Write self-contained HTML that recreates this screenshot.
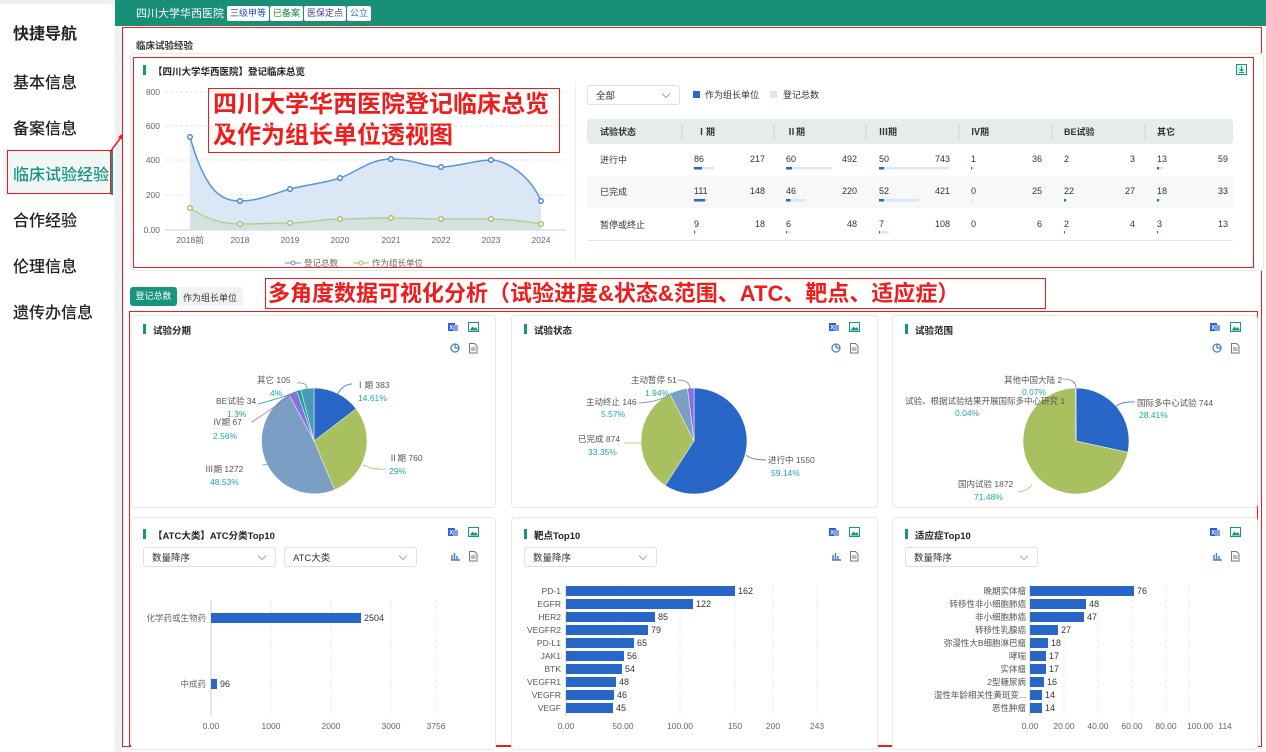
<!DOCTYPE html>
<html><head><meta charset="utf-8">
<style>
*{margin:0;padding:0;box-sizing:border-box}
body{width:1266px;height:752px;overflow:hidden;background:#eef1f3;font-family:"Liberation Sans","Noto Sans CJK SC",sans-serif;position:relative;color:#333}
.a{position:absolute}
.nav{font-size:16px;color:#222;left:13px;font-weight:500}
.badge{position:absolute;top:6px;height:15px;background:#fff;border-radius:2px;font-size:9px;line-height:15px;padding:0 3px}
.card{position:absolute;background:#fff;border:1px solid #e6e8ea;border-radius:4px}
.rb{position:absolute;border:1.5px solid #f01c1c}
.tt{position:absolute;font-size:9.5px;font-weight:bold;color:#222}
.tt:before{content:"";position:absolute;left:-10px;top:1px;width:3px;height:10px;background:#17957f}
.sel{position:absolute;height:20px;border:1px solid #dcdfe3;border-radius:3px;background:#fff;font-size:9.5px;padding-left:8px;color:#333;display:flex;align-items:center}
.sel:after{content:"";position:absolute;right:10px;top:5px;width:5px;height:5px;border-right:1px solid #aaa;border-bottom:1px solid #aaa;transform:rotate(45deg)}
</style></head><body>
<!-- sidebar -->
<div class="a" style="left:0;top:4px;width:115px;height:748px;background:#fff;border-radius:0 8px 0 0"></div>
<div class="a nav" style="top:20px;font-weight:bold">快捷导航</div>
<div class="a nav" style="top:69px">基本信息</div>
<div class="a nav" style="top:115px">备案信息</div>
<div class="a" style="left:3px;top:149px;width:110px;height:46px;background:#f3f6f6"></div>
<div class="a" style="left:111px;top:149px;width:2px;height:46px;background:#17957f"></div>
<div class="a nav" style="top:161px;color:#17957f">临床试验经验</div>
<div class="rb" style="left:7px;top:150px;width:104px;height:44px"></div>
<div class="a nav" style="top:207px">合作经验</div>
<div class="a nav" style="top:253px">伦理信息</div>
<div class="a nav" style="top:299px">遗传办信息</div>
<svg class="a" style="left:108px;top:130px" width="20" height="25"><line x1="2" y1="22" x2="14" y2="6" stroke="#f01c1c" stroke-width="1.5"/><polygon points="17,2 10,7 15,10" fill="#f01c1c"/></svg>
<!-- header -->
<div class="a" style="left:115px;top:0;width:1151px;height:26px;background:#1a8f78"></div>
<div class="a" style="left:136px;top:5px;color:#fff;font-size:11px">四川大学华西医院</div>
<div class="badge" style="left:227px;color:#2a4ec0">三级甲等</div>
<div class="badge" style="left:270px;color:#1c8a3a">已备案</div>
<div class="badge" style="left:304px;color:#4a3a9c">医保定点</div>
<div class="badge" style="left:347px;color:#2a6ec0">公立</div>
<!-- main -->
<div class="a" style="left:122px;top:27px;width:1144px;height:725px;background:#fff"></div>
<div class="rb" style="left:122px;top:27px;width:1140px;height:720px"></div>
<div class="a" style="left:136px;top:38px;font-size:9.5px;font-weight:bold">临床试验经验</div>
<div class="card" style="left:130px;top:53px;width:1134px;height:218px"></div>
<div class="rb" style="left:133px;top:57px;width:1121px;height:211px"></div>
<div class="tt" style="left:153px;top:64px">【四川大学华西医院】登记临床总览</div>
<svg class="a" style="left:1236px;top:64px" width="11" height="11"><rect x="0.5" y="0.5" width="10" height="10" fill="#e3f3ef" stroke="#17957f"/><path d="M5.5 2v5M3.5 5l2 2 2-2M3 8.5h5" stroke="#17957f" fill="none"/></svg>
<div class="a" style="left:575px;top:82px;width:1px;height:180px;background:#eee"></div>
<div class="rb" style="left:208px;top:88px;width:352px;height:65px;background:#fff"></div>
<div class="a" style="left:213px;top:89px;color:#f01c1c;font-weight:bold;font-size:24px;line-height:31px">四川大学华西医院登记临床总览<br>及作为组长单位透视图</div>

<!-- table -->
<div class="sel" style="left:587px;top:85px;width:93px">全部</div>
<div class="a" style="left:693px;top:91px;width:7px;height:7px;background:#2867c7"></div>
<div class="a" style="left:705px;top:88px;font-size:9px">作为组长单位</div>
<div class="a" style="left:770px;top:91px;width:7px;height:7px;background:#dde6ee"></div>
<div class="a" style="left:783px;top:88px;font-size:9px">登记总数</div>
<div class="a" style="left:587px;top:119px;width:646px;height:25px;background:#e6ebeb;border-radius:4px"></div>
<div class="a" style="left:587px;top:176px;width:646px;height:32px;background:#f7f8f8"></div>
<div class="a" style="left:587px;top:240px;width:646px;height:1px;background:#e0e6ee"></div>
<svg class="a" style="left:0;top:0" width="1266" height="752" font-family="Liberation Sans,Noto Sans CJK SC,sans-serif">
<g fill="#333" font-size="9" font-weight="bold">
<text x="600" y="135">试验状态</text><text x="697" y="135">Ⅰ期</text><text x="787" y="135">Ⅱ期</text><text x="879" y="135">Ⅲ期</text><text x="971" y="135">Ⅳ期</text><text x="1064" y="135">BE试验</text><text x="1157" y="135">其它</text>
</g>
<g stroke="#cfd6d8"><line x1="682" y1="124" x2="682" y2="139"/><line x1="774" y1="124" x2="774" y2="139"/><line x1="866" y1="124" x2="866" y2="139"/><line x1="959" y1="124" x2="959" y2="139"/><line x1="1052" y1="124" x2="1052" y2="139"/><line x1="1145" y1="124" x2="1145" y2="139"/></g>
<g font-size="9" fill="#333">
<text x="600" y="163">进行中</text><text x="600" y="195">已完成</text><text x="600" y="228">暂停或终止</text>
<text x="694" y="162">86</text><text x="765" y="162" text-anchor="end">217</text>
<text x="786" y="162">60</text><text x="857" y="162" text-anchor="end">492</text>
<text x="879" y="162">50</text><text x="950" y="162" text-anchor="end">743</text>
<text x="971" y="162">1</text><text x="1042" y="162" text-anchor="end">36</text>
<text x="1064" y="162">2</text><text x="1135" y="162" text-anchor="end">3</text>
<text x="1157" y="162">13</text><text x="1228" y="162" text-anchor="end">59</text>
<text x="694" y="194">111</text><text x="765" y="194" text-anchor="end">148</text>
<text x="786" y="194">46</text><text x="857" y="194" text-anchor="end">220</text>
<text x="879" y="194">52</text><text x="950" y="194" text-anchor="end">421</text>
<text x="971" y="194">0</text><text x="1042" y="194" text-anchor="end">25</text>
<text x="1064" y="194">22</text><text x="1135" y="194" text-anchor="end">27</text>
<text x="1157" y="194">18</text><text x="1228" y="194" text-anchor="end">33</text>
<text x="694" y="227">9</text><text x="765" y="227" text-anchor="end">18</text>
<text x="786" y="227">6</text><text x="857" y="227" text-anchor="end">48</text>
<text x="879" y="227">7</text><text x="950" y="227" text-anchor="end">108</text>
<text x="971" y="227">0</text><text x="1042" y="227" text-anchor="end">6</text>
<text x="1064" y="227">2</text><text x="1135" y="227" text-anchor="end">4</text>
<text x="1157" y="227">3</text><text x="1228" y="227" text-anchor="end">13</text>
</g>
<g fill="#dde5ef">
<rect x="694" y="167" width="20" height="2.5"/><rect x="786" y="167" width="46" height="2.5"/><rect x="879" y="167" width="70" height="2.5"/><rect x="971" y="167" width="3" height="2.5"/><rect x="1157" y="167" width="6" height="2.5"/>
<rect x="694" y="199" width="14" height="2.5"/><rect x="786" y="199" width="20" height="2.5"/><rect x="879" y="199" width="40" height="2.5"/><rect x="971" y="199" width="2" height="2.5"/><rect x="1064" y="199" width="3" height="2.5"/><rect x="1157" y="199" width="3" height="2.5"/>
<rect x="694" y="231" width="2" height="2.5"/><rect x="786" y="231" width="5" height="2.5"/><rect x="879" y="231" width="10" height="2.5"/><rect x="1064" y="231" width="1" height="2.5"/><rect x="1157" y="231" width="1.5" height="2.5"/>
</g>
<g fill="#2867c7">
<rect x="694" y="167" width="8" height="2.5"/><rect x="786" y="167" width="6" height="2.5"/><rect x="879" y="167" width="5" height="2.5"/><rect x="971" y="167" width="1" height="2.5"/><rect x="1157" y="167" width="2" height="2.5"/>
<rect x="694" y="199" width="11" height="2.5"/><rect x="786" y="199" width="4.5" height="2.5"/><rect x="879" y="199" width="5" height="2.5"/><rect x="1064" y="199" width="2" height="2.5"/><rect x="1157" y="199" width="2" height="2.5"/>
<rect x="694" y="231" width="1" height="2.5"/><rect x="786" y="231" width="1" height="2.5"/><rect x="879" y="231" width="1" height="2.5"/><rect x="1064" y="231" width="1" height="2.5"/><rect x="1157" y="231" width="1" height="2.5"/>
</g>

<!-- line chart -->
<g stroke="#dfe6f0" stroke-dasharray="3,2"><line x1="165" y1="92" x2="566" y2="92"/><line x1="165" y1="126" x2="566" y2="126"/><line x1="165" y1="160" x2="566" y2="160"/><line x1="165" y1="195" x2="566" y2="195"/></g>
<line x1="165" y1="230" x2="566" y2="230" stroke="#c8d0dc"/>
<g font-size="8.5" fill="#666" text-anchor="end"><text x="160" y="95">800</text><text x="160" y="129">600</text><text x="160" y="163">400</text><text x="160" y="198">200</text><text x="160" y="233">0.00</text></g>
<g font-size="8.5" fill="#666" text-anchor="middle"><text x="190" y="243">2018前</text><text x="240" y="243">2018</text><text x="290" y="243">2019</text><text x="340" y="243">2020</text><text x="391" y="243">2021</text><text x="441" y="243">2022</text><text x="491" y="243">2023</text><text x="541" y="243">2024</text></g>
<path d="M190,137 C205,190 220,201 240,201 S275,193 290,189 S325,183 340,178 S370,159 391,159 S426,167 441,167 S476,160 491,160 S530,175 541,201 L541,230 L190,230Z" fill="#dbe7f5"/>
<path d="M190,137 C205,190 220,201 240,201 S275,193 290,189 S325,183 340,178 S370,159 391,159 S426,167 441,167 S476,160 491,160 S530,175 541,201" fill="none" stroke="#5a95dc" stroke-width="1.5"/>
<path d="M190,208 C205,218 220,224 240,224 S275,223 290,223 S325,219 340,219 S370,218 391,218 S426,219 441,219 S476,219 491,219 S530,222 541,224 L541,230 L190,230Z" fill="#d4e2df"/>
<path d="M190,208 C205,218 220,224 240,224 S275,223 290,223 S325,219 340,219 S370,218 391,218 S426,219 441,219 S476,219 491,219 S530,222 541,224" fill="none" stroke="#b5c98a" stroke-width="1.3"/>
<g fill="#fff" stroke="#3a7fd5" stroke-width="1.3"><circle cx="190" cy="137" r="2.3"/><circle cx="240" cy="201" r="2.3"/><circle cx="290" cy="189" r="2.3"/><circle cx="340" cy="178" r="2.3"/><circle cx="391" cy="159" r="2.3"/><circle cx="441" cy="167" r="2.3"/><circle cx="491" cy="160" r="2.3"/><circle cx="541" cy="201" r="2.3"/></g>
<g fill="#fff" stroke="#a5bd5a" stroke-width="1.3"><circle cx="190" cy="208" r="2.3"/><circle cx="240" cy="224" r="2.3"/><circle cx="290" cy="223" r="2.3"/><circle cx="340" cy="219" r="2.3"/><circle cx="391" cy="218" r="2.3"/><circle cx="441" cy="219" r="2.3"/><circle cx="491" cy="219" r="2.3"/><circle cx="541" cy="224" r="2.3"/></g>
<line x1="285" y1="263" x2="301" y2="263" stroke="#5a95dc"/><circle cx="293" cy="263" r="2" fill="#fff" stroke="#5a95dc"/>
<text x="304" y="266" font-size="8.5" fill="#666">登记总数</text>
<line x1="353" y1="263" x2="369" y2="263" stroke="#a5bd5a"/><circle cx="361" cy="263" r="2" fill="#fff" stroke="#a5bd5a"/>
<text x="372" y="266" font-size="8.5" fill="#666">作为组长单位</text>
</svg>

<!-- tabs -->
<div class="a" style="left:130px;top:287px;width:113px;height:19px;background:#f0f2f4;border-radius:3px"></div>
<div class="a" style="left:130px;top:287px;width:47px;height:19px;background:#17957f;border-radius:3px;color:#fff;font-size:9px;line-height:19px;text-align:center">登记总数</div>
<div class="a" style="left:183px;top:291px;font-size:9px;color:#333">作为组长单位</div>
<div class="rb" style="left:265px;top:278px;width:781px;height:31px"></div>
<div class="a" style="left:268px;top:280px;color:#f01c1c;font-weight:bold;font-size:22px;line-height:27px;white-space:nowrap">多角度数据可视化分析（试验进度&amp;状态&amp;范围、ATC、靶点、适应症）</div>
<div class="rb" style="left:129px;top:311px;width:1129px;height:435px"></div>

<!-- cards -->
<div class="card" style="left:131px;top:315px;width:365px;height:193px"></div>
<div class="card" style="left:511px;top:315px;width:367px;height:193px"></div>
<div class="card" style="left:892px;top:315px;width:366px;height:193px"></div>
<div class="card" style="left:131px;top:517px;width:365px;height:233px"></div>
<div class="card" style="left:511px;top:517px;width:367px;height:233px"></div>
<div class="card" style="left:892px;top:517px;width:366px;height:233px"></div>
<div class="tt" style="left:153px;top:323px">试验分期</div>
<div class="tt" style="left:534px;top:323px">试验状态</div>
<div class="tt" style="left:915px;top:323px">试验范围</div>
<div class="tt" style="left:153px;top:528px">【ATC大类】ATC分类Top10</div>
<div class="tt" style="left:534px;top:528px">靶点Top10</div>
<div class="tt" style="left:915px;top:528px">适应症Top10</div>
<div class="sel" style="left:143px;top:547px;width:133px">数量降序</div>
<div class="sel" style="left:284px;top:547px;width:133px">ATC大类</div>
<div class="sel" style="left:524px;top:547px;width:133px">数量降序</div>
<div class="sel" style="left:905px;top:547px;width:133px">数量降序</div>

<svg class="a" style="left:0;top:0" width="1266" height="752" font-family="Liberation Sans,Noto Sans CJK SC,sans-serif">
<defs>
<g id="xl"><rect x="0" y="1" width="7" height="8" fill="#2f5fd0"/><rect x="5" y="3" width="5" height="6" fill="#7aa0ee"/><text x="1.2" y="7.5" font-size="6" fill="#fff" font-weight="bold">X</text></g>
<g id="im"><rect x="0.5" y="0.5" width="10" height="9" fill="#fff" stroke="#17957f"/><path d="M1.5 8.5l3-4 2 2 1.5-1.5 2 3.5z" fill="#17957f"/></g>
<g id="pi"><circle cx="5" cy="5" r="4" fill="none" stroke="#4a7fcc" stroke-width="1.3"/><path d="M5 5V1M5 5h4" stroke="#4a7fcc" stroke-width="1.3"/></g>
<g id="bc"><path d="M1 9h9M2 9V4M4.5 9V2M7 9V5" stroke="#4a7fcc" stroke-width="1.5"/></g>
<g id="dc"><path d="M1.5 0.5h5l2.5 2.5v7h-7.5z" fill="#fff" stroke="#777"/><path d="M3 5h4.5M3 7h4.5" stroke="#777"/></g>
</defs>
<use href="#xl" x="448" y="322"/><use href="#im" x="468" y="322"/><use href="#pi" x="450" y="343"/><use href="#dc" x="468" y="343"/>
<use href="#xl" x="829" y="322"/><use href="#im" x="849" y="322"/><use href="#pi" x="831" y="343"/><use href="#dc" x="849" y="343"/>
<use href="#xl" x="1210" y="322"/><use href="#im" x="1230" y="322"/><use href="#pi" x="1212" y="343"/><use href="#dc" x="1230" y="343"/>
<use href="#xl" x="448" y="527"/><use href="#im" x="468" y="527"/><use href="#bc" x="450" y="551"/><use href="#dc" x="468" y="551"/>
<use href="#xl" x="829" y="527"/><use href="#im" x="849" y="527"/><use href="#bc" x="831" y="551"/><use href="#dc" x="849" y="551"/>
<use href="#xl" x="1210" y="527"/><use href="#im" x="1230" y="527"/><use href="#bc" x="1212" y="551"/><use href="#dc" x="1230" y="551"/>

<!-- pie 1 -->
<g stroke="#fff" stroke-width="0.5">
<path d="M314,441 L314,388 A53,53 0 0 1 356.1,408.8Z" fill="#2867c7"/>
<path d="M314,441 L356.1,408.8 A53,53 0 0 1 334.7,489.8Z" fill="#a8c060"/>
<path d="M314,441 L334.7,489.8 A53,53 0 0 1 288.9,394.4Z" fill="#7b9ec4"/>
<path d="M314,441 L288.9,394.4 A53,53 0 0 1 296.7,390.9Z" fill="#8a6fe0"/>
<path d="M314,441 L296.7,390.9 A53,53 0 0 1 300.8,389.6Z" fill="#1aa39a"/>
<path d="M314,441 L300.8,389.6 A53,53 0 0 1 314,388Z" fill="#4a9ab5"/>
</g>
<g fill="none" stroke-width="0.8">
<path d="M337,395 Q343,384 352,384" stroke="#2867c7"/>
<path d="M363,465 Q372,470 386,469" stroke="#a8c060"/>
<path d="M262,465 Q268,465 270,462" stroke="#7b9ec4"/>
<path d="M252,422 Q285,400 293,393" stroke="#8a6fe0"/>
<path d="M258,404 Q285,397 298,391" stroke="#1aa39a"/>
<path d="M297,383 Q307,382 307,389" stroke="#4a9ab5"/>
</g>
<g font-size="8.5" fill="#555">
<text x="356" y="388">Ⅰ期 383</text><text x="389" y="461">Ⅱ期 760</text><text x="205" y="472">Ⅲ期 1272</text><text x="213" y="425">Ⅳ期 67</text><text x="216" y="404">BE试验 34</text><text x="257" y="383">其它 105</text>
</g>
<g font-size="8.5" fill="#20a8a0">
<text x="358" y="401">14.61%</text><text x="389" y="474">29%</text><text x="210" y="485">48.53%</text><text x="213" y="439">2.56%</text><text x="227" y="417">1.3%</text><text x="270" y="396">4%</text>
</g>
<!-- pie 2 -->
<g stroke="#fff" stroke-width="0.5">
<path d="M694,441 L694,388 A53,53 0 1 1 665.2,485.5Z" fill="#2867c7"/>
<path d="M694,441 L665.2,485.5 A53,53 0 0 1 669.9,393.8Z" fill="#a8c060"/>
<path d="M694,441 L669.9,393.8 A53,53 0 0 1 687.5,388.4Z" fill="#7b9ec4"/>
<path d="M694,441 L687.5,388.4 A53,53 0 0 1 694,388Z" fill="#8a6fe0"/>
</g>
<g fill="none" stroke-width="0.8">
<path d="M746,455 Q752,460 766,460" stroke="#2867c7"/>
<path d="M624,443 L644,443" stroke="#a8c060"/>
<path d="M638,403 Q660,402 672,393" stroke="#7b9ec4"/>
<path d="M678,380 Q690,380 690,389" stroke="#8a6fe0"/>
</g>
<g font-size="8.5" fill="#555"><text x="768" y="463">进行中 1550</text><text x="578" y="442">已完成 874</text><text x="586" y="405">主动终止 146</text><text x="631" y="383">主动暂停 51</text></g>
<g font-size="8.5" fill="#20a8a0"><text x="771" y="476">59.14%</text><text x="588" y="455">33.35%</text><text x="601" y="417">5.57%</text><text x="645" y="396">1.94%</text></g>
<!-- pie 3 -->
<g stroke="#fff" stroke-width="0.5">
<path d="M1076,441 L1076,388 A53,53 0 0 1 1127.8,452.3Z" fill="#2867c7"/>
<path d="M1076,441 L1127.8,452.3 A53,53 0 1 1 1075.6,388Z" fill="#a8c060"/>
<path d="M1076,441 L1075.6,388 L1076,388Z" fill="#8a6fe0"/>
</g>
<g fill="none" stroke-width="0.8">
<path d="M1115,407 Q1122,401 1135,402" stroke="#2867c7"/>
<path d="M1032,485 Q1025,492 1018,492" stroke="#a8c060"/>
<path d="M1063,379 Q1076,379 1076,388" stroke="#8a6fe0"/>
</g>
<g font-size="8.5" fill="#555"><text x="1137" y="406">国际多中心试验 744</text><text x="958" y="487">国内试验 1872</text><text x="1004" y="383">其他中国大陆 2</text><text x="905" y="404">试验、根据试验结果开展国际多中心研究 1</text></g>
<g font-size="8.5" fill="#20a8a0"><text x="1139" y="418">28.41%</text><text x="974" y="500">71.48%</text><text x="1022" y="395">0.07%</text><text x="955" y="416">0.04%</text></g>

<!-- ATC bar -->
<g stroke="#e6e9ed" stroke-dasharray="3,2"><line x1="271" y1="600" x2="271" y2="715"/><line x1="331" y1="600" x2="331" y2="715"/><line x1="391" y1="600" x2="391" y2="715"/><line x1="436" y1="600" x2="436" y2="715"/></g>
<line x1="211" y1="600" x2="211" y2="715" stroke="#c8d0dc"/>
<rect x="211" y="613" width="150" height="10" fill="#2867c7"/>
<rect x="211" y="679" width="6" height="10" fill="#2867c7"/>
<text x="364" y="621" font-size="9" fill="#333">2504</text><text x="220" y="687" font-size="9" fill="#333">96</text>
<g font-size="8.5" fill="#666" text-anchor="end"><text x="206" y="621">化学药或生物药</text><text x="206" y="687">中成药</text></g>
<g font-size="8.5" fill="#666" text-anchor="middle"><text x="211" y="729">0.00</text><text x="271" y="729">1000</text><text x="331" y="729">2000</text><text x="391" y="729">3000</text><text x="436" y="729">3756</text></g>

<!-- target bar -->
<g stroke="#e6e9ed" stroke-dasharray="3,2"><line x1="623" y1="585" x2="623" y2="716"/><line x1="680" y1="585" x2="680" y2="716"/><line x1="735" y1="585" x2="735" y2="716"/><line x1="773" y1="585" x2="773" y2="716"/><line x1="817" y1="585" x2="817" y2="716"/></g>
<line x1="566" y1="585" x2="566" y2="716" stroke="#c8d0dc"/>
<g fill="#2867c7">
<rect x="566" y="586" width="169" height="10"/><rect x="566" y="599" width="127" height="10"/><rect x="566" y="612" width="89" height="10"/><rect x="566" y="625" width="82" height="10"/><rect x="566" y="638" width="68" height="10"/><rect x="566" y="651" width="58" height="10"/><rect x="566" y="664" width="56" height="10"/><rect x="566" y="677" width="50" height="10"/><rect x="566" y="690" width="48" height="10"/><rect x="566" y="703" width="47" height="10"/>
</g>
<g font-size="9" fill="#333"><text x="738" y="594">162</text><text x="696" y="607">122</text><text x="658" y="620">85</text><text x="651" y="633">79</text><text x="637" y="646">65</text><text x="627" y="659">56</text><text x="625" y="672">54</text><text x="619" y="685">48</text><text x="617" y="698">46</text><text x="616" y="711">45</text></g>
<g font-size="8.5" fill="#555" text-anchor="end"><text x="561" y="594">PD-1</text><text x="561" y="607">EGFR</text><text x="561" y="620">HER2</text><text x="561" y="633">VEGFR2</text><text x="561" y="646">PD-L1</text><text x="561" y="659">JAK1</text><text x="561" y="672">BTK</text><text x="561" y="685">VEGFR1</text><text x="561" y="698">VEGFR</text><text x="561" y="711">VEGF</text></g>
<g font-size="8.5" fill="#666" text-anchor="middle"><text x="566" y="729">0.00</text><text x="623" y="729">50.00</text><text x="680" y="729">100.00</text><text x="735" y="729">150</text><text x="773" y="729">200</text><text x="817" y="729">243</text></g>

<!-- indication bar -->
<g stroke="#e6e9ed" stroke-dasharray="3,2"><line x1="1064" y1="585" x2="1064" y2="716"/><line x1="1098" y1="585" x2="1098" y2="716"/><line x1="1132" y1="585" x2="1132" y2="716"/><line x1="1166" y1="585" x2="1166" y2="716"/><line x1="1189" y1="585" x2="1189" y2="716"/></g>
<line x1="1030" y1="585" x2="1030" y2="716" stroke="#c8d0dc"/>
<g fill="#2867c7">
<rect x="1030" y="586" width="104" height="10"/><rect x="1030" y="599" width="56" height="10"/><rect x="1030" y="612" width="54" height="10"/><rect x="1030" y="625" width="28" height="10"/><rect x="1030" y="638" width="18" height="10"/><rect x="1030" y="651" width="16" height="10"/><rect x="1030" y="664" width="16" height="10"/><rect x="1030" y="677" width="14" height="10"/><rect x="1030" y="690" width="12" height="10"/><rect x="1030" y="703" width="12" height="10"/>
</g>
<g font-size="9" fill="#333"><text x="1137" y="594">76</text><text x="1089" y="607">48</text><text x="1087" y="620">47</text><text x="1061" y="633">27</text><text x="1051" y="646">18</text><text x="1049" y="659">17</text><text x="1049" y="672">17</text><text x="1047" y="685">16</text><text x="1045" y="698">14</text><text x="1045" y="711">14</text></g>
<g font-size="8.5" fill="#555" text-anchor="end"><text x="1026" y="594">晚期实体瘤</text><text x="1026" y="607">转移性非小细胞肺癌</text><text x="1026" y="620">非小细胞肺癌</text><text x="1026" y="633">转移性乳腺癌</text><text x="1026" y="646">弥漫性大B细胞淋巴瘤</text><text x="1026" y="659">哮喘</text><text x="1026" y="672">实体瘤</text><text x="1026" y="685">2型糖尿病</text><text x="1026" y="698">湿性年龄相关性黄斑变...</text><text x="1026" y="711">恶性肿瘤</text></g>
<g font-size="8.5" fill="#666" text-anchor="middle"><text x="1030" y="729">0.00</text><text x="1064" y="729">20.00</text><text x="1098" y="729">40.00</text><text x="1132" y="729">60.00</text><text x="1166" y="729">80.00</text><text x="1200" y="729">100.00</text><text x="1225" y="729">114</text></g>
</svg>
</body></html>
